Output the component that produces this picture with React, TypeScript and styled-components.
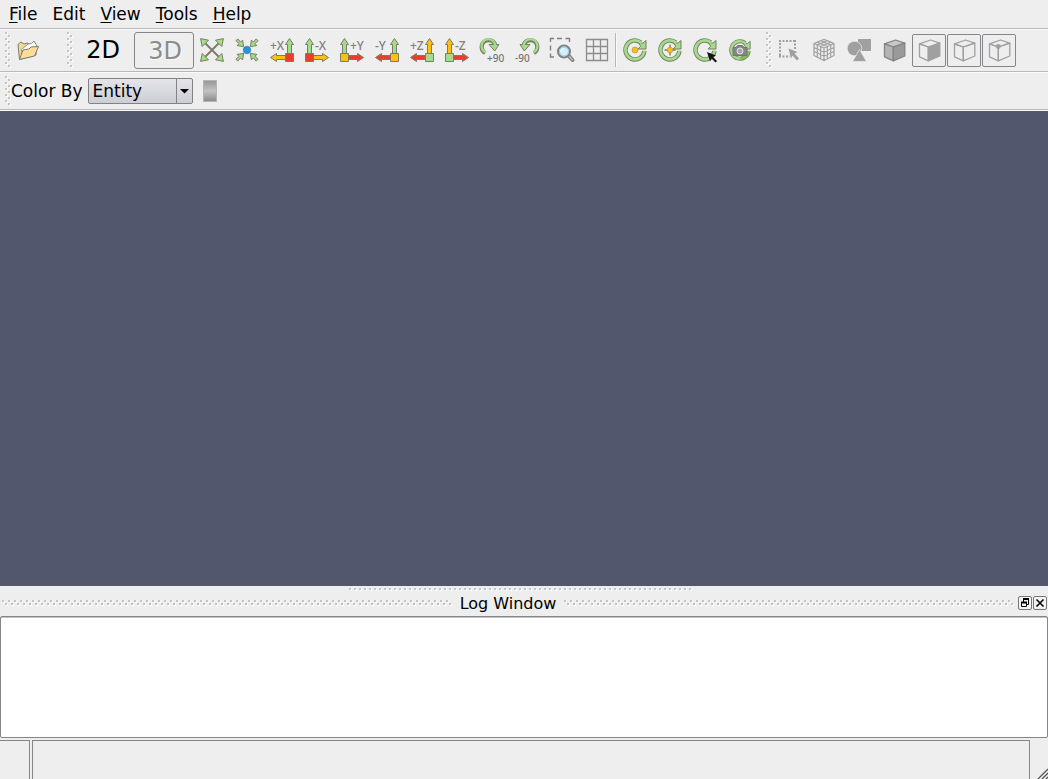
import React from 'react';
import styled, { createGlobalStyle } from 'styled-components';

const GlobalStyle = createGlobalStyle`
  * { box-sizing: border-box; }
  body { margin: 0; background: #eeeeee; }
  body, button, select, textarea { font-family: "DejaVu Sans", sans-serif; color: #000; }
`;

const dots = (w: number, h: number, squares: [number, number][]) =>
  `url("data:image/svg+xml,${encodeURIComponent(
    `<svg xmlns='http://www.w3.org/2000/svg' width='${w}' height='${h}' shape-rendering='crispEdges'>` +
      squares
        .map(([x, y]) => `<path fill='#fff' d='M${x + 1} ${y + 1}h2v2h-2z'/><path fill='#c4c4c4' d='M${x} ${y}h2v2h-2z'/>`)
        .join('') +
      `</svg>`
  )}")`;

const staggered = dots(6, 6, [[0, 0], [3, 3]]);
const single = dots(5, 3, [[0, 0]]);

const Window = styled.div`
  display: flex;
  flex-direction: column;
  height: 100vh;
  overflow: hidden;
`;

const MenuBar = styled.nav`
  display: flex;
  height: 30px;
  padding: 0 2px;
  border-bottom: 1px solid #fafafa;
  box-shadow: inset 0 -1px #b8b8b8;
`;

const MenuItem = styled.button`
  border: 0;
  background: none;
  padding: 0 8px 2px 7px;
  font-size: 17px;
  line-height: 26px;
  u { text-decoration-thickness: 1px; text-underline-offset: 2px; }
`;

const ToolBar = styled.div<{ $height: number }>`
  display: flex;
  align-items: center;
  height: ${p => p.$height}px;
  border-bottom: 1px solid #fafafa;
  box-shadow: inset 0 -1px #b8b8b8;
  padding: 0 5px 2px;
`;

const Handle = styled.div<{ $length: number }>`
  width: 6px;
  height: ${p => p.$length}px;
  flex: none;
  background: ${staggered};
`;

const Group = styled.div<{ $end?: number }>`
  display: flex;
  align-items: center;
  gap: 1px;
  margin-right: ${p => p.$end || 0}px;
`;

const ToolButton = styled.button<{ $framed?: boolean }>`
  display: flex;
  align-items: center;
  justify-content: center;
  flex: none;
  width: 34px;
  height: 33px;
  padding: 0;
  border: 1px solid ${p => (p.$framed ? '#85858a' : 'transparent')};
  border-radius: 2px;
  background: none;
`;

const ModeButton = styled.button<{ $framed?: boolean }>`
  flex: none;
  width: 60px;
  height: 37px;
  padding: ${p => (p.$framed ? '1px 0 0 2px' : '0')};
  border: 1px solid ${p => (p.$framed ? '#85858a' : 'transparent')};
  border-radius: 3px;
  background: none;
  font-size: 24px;
  line-height: 32px;
  &:disabled { color: #8c8c8c; text-shadow: 1px 1px #fafafa; }
`;

const Separator = styled.div`
  width: 2px;
  height: 34px;
  margin: 0 1px;
  background: linear-gradient(to right, #b8b8b8 50%, #fafafa 50%);
`;

const ColorLabel = styled.label`
  font-size: 17px;
  line-height: 24px;
  margin-right: 5px;
`;

const Combo = styled.div`
  position: relative;
  width: 105px;
  height: 26px;
  svg { position: absolute; right: 0; top: 0; pointer-events: none; }
`;

const ComboSelect = styled.select`
  appearance: none;
  width: 100%;
  height: 100%;
  padding: 0 20px 0 4px;
  border: 1px solid #828287;
  border-radius: 2px;
  background: linear-gradient(#e4e4e9, #cdcdd5);
  font-size: 17px;
  line-height: 22px;
`;

const Swatch = styled.button`
  width: 14px;
  height: 22px;
  margin-left: 10px;
  padding: 0;
  border: 1px solid #b4b4b4;
  background: linear-gradient(#989898, #c2c2c2 50%, #8c8c8c);
`;

const Viewport = styled.main`
  flex: 1;
  min-height: 0;
  background: #52576e;
`;

const Splitter = styled.div`
  flex: none;
  height: 5px;
  padding: 2px 7px 0 0;
  &::after {
    content: "";
    display: block;
    width: 343px;
    height: 3px;
    margin: 0 auto;
    background: ${single};
  }
`;

const Dock = styled.section`
  flex: none;
`;

const DockTitle = styled.header`
  display: flex;
  align-items: center;
  height: 25px;
  padding: 0 1px 1px 2px;
`;

const TitleDots = styled.div`
  flex: 1;
  height: 6px;
  background: ${staggered};
`;

const DockName = styled.h2`
  margin: 0 8px;
  padding-top: 2px;
  font-size: 16px;
  font-weight: 400;
  line-height: 22px;
`;

const DockButton = styled.button`
  display: flex;
  width: 14px;
  height: 14px;
  margin-left: 1px;
  padding: 0;
  border: 1px solid #77777c;
  border-radius: 2px;
  background: #f2f2f2;
  &:first-of-type { margin-left: 4px; }
`;

const LogText = styled.textarea`
  display: block;
  width: 100%;
  height: 122px;
  border: 1px solid #85858a;
  border-radius: 2px;
  background: #fff;
  box-shadow: inset 0 1px #c4c4c4;
  resize: none;
  outline: 0;
`;

const StatusBar = styled.footer`
  display: flex;
  align-items: flex-end;
  gap: 2px;
  flex: none;
  height: 41px;
`;

const StatusCell = styled.div<{ $grow?: boolean }>`
  height: 39px;
  width: 30px;
  flex: ${p => (p.$grow ? 1 : 'none')};
  border: solid #85858a;
  border-width: 1px 1px 0 ${p => (p.$grow ? 1 : 0)}px;
`;

const Grip = styled.svg`
  margin-left: 2px;
  flex: none;
`;

const GREEN = '#a3dc8c';
const LINE = '#7b7c64';
const RED = '#e3402d';
const YELLOW = '#fdc010';
const GRAY = '#a0a0a0';

const Icon = ({ children }: { children: React.ReactNode }) => (
  <svg width="24" height="24" viewBox="0 0 24 24" fill="none" overflow="visible" aria-hidden="true">{children}</svg>
);

const OpenIcon = () => (
  <Icon>
    <path d="M3.5 21.5 2 6.5l3-2.5 3 2 3-1 9 3v9l-3 1z" fill="#f5d79b" stroke={LINE} />
    <path d="M5.5 11.5 12 6l3.5-.5 2.5-2.5 3 5-2 4-13 4z" fill="#fff" stroke="#91927f" />
    <path d="m3.500 21.500 3.500-9.500 6-1 2-2 7.500-.5-4 9.500z" fill="#ffdc9a" stroke={LINE} strokeLinejoin="round" />
  </Icon>
);

const corners = [0, 90, 180, 270];

const FitIcon = () => (
  <Icon>
    <path d="m5 5 14 14M19 5 5 19" stroke={LINE} strokeWidth="1.900" />
    {corners.map(a => (
      <path key={a} transform={`rotate(${a} 12 12)`} d="M.6.6 8.500 2.200 2.200 8.500z" fill={GREEN} stroke={LINE} strokeLinejoin="round" />
    ))}
  </Icon>
);

const CenterIcon = () => (
  <Icon>
    {corners.map(a => (
      <path key={a} transform={`rotate(${a} 12 12)`} d="m8.600 8.600-1-6.500-2 2L2.800.9.9 2.800l3.200 2.800-2 2z" fill={GREEN} stroke={LINE} strokeLinejoin="round" />
    ))}
    <circle cx="12" cy="12" r="3.800" fill="#2098dc" stroke="#417792" strokeWidth=".6" />
  </Icon>
);

type AxisProps = { label: string; up: string; side: string; origin: string; right?: boolean };
const AxisIcon = ({ label, up, side, origin, right }: AxisProps) => (
  <Icon>
    <g transform={right ? 'translate(24 0) scale(-1 1)' : undefined} stroke={LINE}>
      <path d="M17.500 15.500V6.500h-2L19.500.5l4 6h-2v9z" fill={up} />
      <path d="M15.500 17.500H6.500v-2l-6 4 6 4v-2h9z" fill={side} />
      <path d="M15.500 15.500h8v8h-8z" fill={origin} />
    </g>
    <text x={right ? 10 : 0} y="12" fontSize="12" fontWeight="500" fill="#808080" fontFamily="Noto Sans">{label}</text>
  </Icon>
);

const Rotate90Icon = ({ label, ccw }: { label: string; ccw?: boolean }) => (
  <Icon>
    <g transform={ccw ? 'translate(24 0) scale(-1 1)' : undefined}>
      <path d="M5.200 15A6.900 6.900 0 1 1 15.300 7.500" stroke={LINE} strokeWidth="4.200" />
      <path d="M9 6.500h10l-4.300 6.500z" fill={GREEN} stroke={LINE} strokeLinejoin="round" />
      <path d="M5.500 14.300A6.900 6.900 0 1 1 15.200 9" stroke={GREEN} strokeWidth="2.300" />
    </g>
    <text x={ccw ? 0 : 7} y="24" fontSize="10" fontWeight="500" fill="#747474" fontFamily="Noto Sans">{label}</text>
  </Icon>
);

const ZoomBoxIcon = () => (
  <Icon>
    <path d="M.5 4V.5H4M7 .5h5M15.500.5h4V4M.5 7.500v5M.5 15.500v3.500H4" stroke="#808080" strokeWidth="1.400" />
    <path d="m18.500 17.500 4 4.500" stroke="#808080" strokeWidth="4" strokeLinecap="round" />
    <path d="m19 18 3.300 3.700" stroke="#bcbcbc" strokeWidth="1.600" strokeLinecap="round" />
    <circle cx="14" cy="13.500" r="6" fill="#d5effb" stroke="#808080" strokeWidth="2" />
    <circle cx="14" cy="13.500" r="4.500" stroke="#8bcbea" />
    <path d="M11 13.500a3 3 0 0 1 3-3" stroke="#fff" />
  </Icon>
);

const GridIcon = () => (
  <Icon>
    <path d="M1.500 1.500h21v21h-21zM8.500 1.500v21M15.500 1.500v21M1.500 8.500h21M1.500 15.500h21" stroke="#8c8c8c" strokeWidth="1.300" />
  </Icon>
);

const RotateIcon = ({ children, bottom }: { children: React.ReactNode; bottom?: string }) => (
  <Icon>
    <g transform={bottom ? 'translate(1 1) scale(.92)' : undefined}>
      <path d="M17.800 4.500A9.500 9.500 0 1 0 21.400 13" stroke={LINE} strokeWidth="4.400" />
      <path d="M23 2.500v8.500h-8l2.700-2.700-2-3.300 4.300 0z" fill={GREEN} stroke={LINE} strokeLinejoin="round" />
      <path d="M18.500 5A9.500 9.500 0 1 0 21.400 12.500" stroke={GREEN} strokeWidth="2.600" />
      {bottom && <path d="M12 21.500a9.500 9.500 0 0 0 9.400-8" stroke={bottom} strokeWidth="2.600" />}
    </g>
    {children}
  </Icon>
);

const cube = {
  top: 'M2.500 5.800 13.500 2l9.300 3.200-11.500 3.800z',
  left: 'M2.500 5.800l8.800 3.200v13.800l-8.800-4z',
  right: 'M11.300 9l11.500-3.800v12.800l-11.500 4.800z',
};
type CubeProps = { top?: string; left?: string; right?: string; line?: string; children?: React.ReactNode };
const CubeIcon = ({ top, left, right, line = GRAY, children }: CubeProps) => (
  <Icon>
    <g stroke={line} strokeWidth="1.300" strokeLinejoin="round">
      <path d={cube.top} fill={top} />
      <path d={cube.left} fill={left} />
      <path d={cube.right} fill={right} />
      {children}
    </g>
  </Icon>
);

const SelectIcon = () => (
  <Icon>
    <path d="M2 3h17M3 5v13M2 18.500h11M18 2v9" stroke={GRAY} strokeWidth="2" strokeDasharray="2 1.500" />
    <path d="m11.500 10.500 9 3.500-3 1.500 4.500 5-2 2-4.500-5-1.500 3z" fill={GRAY} />
  </Icon>
);

const MeshIcon = () => (
  <Icon>
    <path d="m2 5.500 10-4 10 4v12l-10 5-10-5zM2 5.500l10 4.500 10-4.500M12 10v12.500M5.300 4.200l10 4.300v12.500M8.700 2.800l10 4.200v12M18.700 4.200l-10 4.300v12.500M15.300 2.800 5.300 7v12M2 9.500l10 4.500 10-4.500M2 13.500l10 4.500 10-4.500" stroke={GRAY} strokeWidth="1.200" />
  </Icon>
);

const ShapesIcon = () => (
  <Icon>
    <path d="M11 1h13v12H11z" fill={GRAY} />
    <circle cx="7.500" cy="10.500" r="7.300" fill={GRAY} stroke="#eeeeee" strokeWidth=".7" />
    <path d="m12.500 11.500 7 12h-14z" fill={GRAY} stroke="#eeeeee" strokeWidth=".7" />
  </Icon>
);

type Tool = { name: string; icon: React.ReactNode; framed?: boolean };

const viewTools: Tool[] = [
  { name: 'Fit all', icon: <FitIcon /> },
  { name: 'Center', icon: <CenterIcon /> },
  { name: 'View +X', icon: <AxisIcon label="+X" up={GREEN} side={YELLOW} origin={RED} /> },
  { name: 'View -X', icon: <AxisIcon label="-X" up={GREEN} side={YELLOW} origin={RED} right /> },
  { name: 'View +Y', icon: <AxisIcon label="+Y" up={GREEN} side={RED} origin={YELLOW} right /> },
  { name: 'View -Y', icon: <AxisIcon label="-Y" up={GREEN} side={RED} origin={YELLOW} /> },
  { name: 'View +Z', icon: <AxisIcon label="+Z" up={YELLOW} side={RED} origin={GREEN} /> },
  { name: 'View -Z', icon: <AxisIcon label="-Z" up={YELLOW} side={RED} origin={GREEN} right /> },
  { name: 'Rotate +90', icon: <Rotate90Icon label="+90" /> },
  { name: 'Rotate -90', icon: <Rotate90Icon label="-90" ccw /> },
  { name: 'Zoom to box', icon: <ZoomBoxIcon /> },
  { name: 'Grid', icon: <GridIcon /> },
];

const rotationTools: Tool[] = [
  { name: 'Rotate about center', icon: <RotateIcon><circle cx="12" cy="12" r="3" fill={YELLOW} stroke="#b89b50" strokeWidth=".8" /></RotateIcon> },
  {
    name: 'Rotate about focus',
    icon: (
      <RotateIcon>
        <path d="M12 6.500v11M6.500 12h11" stroke={LINE} strokeWidth="1.400" />
        <circle cx="12" cy="12" r="2.800" fill={YELLOW} stroke="#b89b50" strokeWidth=".8" />
      </RotateIcon>
    ),
  },
  { name: 'Pick rotation point', icon: <RotateIcon><path d="m14 14 9 3.500-3 1.500 4 4-1.500 1.500-4-4-1.500 3z" fill="#151515" /></RotateIcon> },
  {
    name: 'Rotate about camera',
    icon: (
      <RotateIcon bottom="#72c54d">
        <path d="M5 9.500h3l1.500-2h5l1.500 2h3v8H5z" fill="#868686" stroke="#747474" />
        <circle cx="12" cy="13" r="3" fill="#a8a8a8" stroke="#e6e6e6" />
      </RotateIcon>
    ),
  },
];

const displayTools: Tool[] = [
  { name: 'Select', icon: <SelectIcon /> },
  { name: 'Mesh', icon: <MeshIcon /> },
  { name: 'Geometry', icon: <ShapesIcon /> },
  { name: 'Solid', icon: <CubeIcon top="#c8c8c8" left="#b4b4b4" right="#9a9a9a" line="#848484" /> },
  { name: 'Faces', icon: <CubeIcon right={GRAY} />, framed: true },
  { name: 'Edges', icon: <CubeIcon />, framed: true },
  { name: 'Vertices', icon: <CubeIcon><circle cx="11.300" cy="8.500" r="1.800" fill={GRAY} /></CubeIcon>, framed: true },
];

const Tools = ({ items }: { items: Tool[] }) => (
  <>
    {items.map(t => (
      <ToolButton key={t.name} aria-label={t.name} $framed={t.framed}>{t.icon}</ToolButton>
    ))}
  </>
);

export default function App() {
  return (
    <Window>
      <GlobalStyle />
      <MenuBar>
        {['File', 'Edit', 'View', 'Tools', 'Help'].map(m => (
          <MenuItem key={m}>{m === 'Edit' ? m : <><u>{m[0]}</u>{m.slice(1)}</>}</MenuItem>
        ))}
      </MenuBar>
      <ToolBar $height={43}>
        <Handle $length={36} />
        <Group $end={22}>
          <ToolButton aria-label="Open"><OpenIcon /></ToolButton>
        </Group>
        <Handle $length={36} />
        <Group>
          <ModeButton>2D</ModeButton>
          <ModeButton $framed disabled>3D</ModeButton>
          <Tools items={viewTools} />
        </Group>
        <Separator />
        <Group $end={9}>
          <Tools items={rotationTools} />
        </Group>
        <Handle $length={36} />
        <Group>
          <Tools items={displayTools} />
        </Group>
      </ToolBar>
      <ToolBar $height={38}>
        <Handle $length={30} />
        <ColorLabel htmlFor="color-by">Color By</ColorLabel>
        <Combo>
          <ComboSelect id="color-by"><option>Entity</option></ComboSelect>
          <svg width="17" height="26" viewBox="0 0 17 26" aria-hidden="true">
            <path d="M.5 1v24" stroke="#828287" />
            <path d="M4 11h9l-4.500 4.500z" fill="#000" />
          </svg>
        </Combo>
        <Swatch aria-label="Color bar" />
      </ToolBar>
      <Viewport />
      <Splitter />
      <Dock>
        <DockTitle>
          <TitleDots />
          <DockName id="log-title">Log Window</DockName>
          <TitleDots />
          <DockButton aria-label="Float">
            <svg width="12" height="12" viewBox="0 0 12 12" fill="none" stroke="#000">
              <path d="M4 2h6M4.500 2v3M9.500 2v5.500H8M2 5.500h5M2.500 5v4.500h5V5" strokeWidth="1" />
              <path d="M4 2h6M2 5.500h6" strokeWidth="1.800" />
            </svg>
          </DockButton>
          <DockButton aria-label="Close">
            <svg width="12" height="12" viewBox="0 0 12 12" stroke="#000" strokeWidth="1.600"><path d="m2.500 2.500 7 7m0-7-7 7" /></svg>
          </DockButton>
        </DockTitle>
        <LogText aria-labelledby="log-title" readOnly />
      </Dock>
      <StatusBar>
        <StatusCell />
        <StatusCell $grow />
        <Grip width="14" height="14" viewBox="0 0 14 14" stroke="#555" strokeWidth="1.300" aria-hidden="true">
          <path d="M4 14 14 4M8 14l6-6M12 14l2-2" />
        </Grip>
      </StatusBar>
    </Window>
  );
}
